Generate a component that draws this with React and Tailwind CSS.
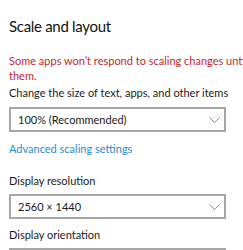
export default function App() {
  const Chevron = () => (
    <svg width="11" height="6" viewBox="0 0 11 6" className="shrink-0">
      <path d="M0.5 0.5 L5.5 5.5 L10.5 0.5" fill="none" stroke="#8f8f8f" strokeWidth="1" />
    </svg>
  );
  const Box = ({ children }) => (
    <div className="flex h-[25px] w-[217px] items-center justify-between border-2 border-[#a6a6a6] pl-[7px] pr-[4px] text-[11px] leading-[15px] text-[#1a1a1a]">
      <span>{children}</span>
      <Chevron />
    </div>
  );
  return (
    <div
      className="h-[250px] w-[243px] overflow-hidden bg-white pl-[9px]"
      style={{ fontFamily: "Lato, 'Noto Sans', sans-serif" }}
    >
      <div className="pt-[17px] text-[15px] leading-[19px] font-normal tracking-[-0.3px] text-[#111111]">Scale and layout</div>
      <div className="mt-[17px] w-[310px] text-[11px] leading-[15px] text-[#c4262b]">
        Some apps won’t respond to scaling changes until you restart them.
      </div>
      <div className="mt-[2px] text-[11px] leading-[15px] text-[#1a1a1a] whitespace-nowrap">
        Change the size of text, apps, and other items
      </div>
      <div className="mt-[7px]">
        <Box>100% (Recommended)</Box>
      </div>
      <div className="mt-[9px] text-[11px] leading-[15px] text-[#2a8ad4]">Advanced scaling settings</div>
      <div className="mt-[17px] text-[11px] leading-[15px] text-[#1a1a1a]">Display resolution</div>
      <div className="mt-[6px]">
        <Box>2560 × 1440</Box>
      </div>
      <div className="mt-[8px] text-[11px] leading-[15px] text-[#1a1a1a]">Display orientation</div>
      <div className="mt-[6px]">
        <Box>Landscape</Box>
      </div>
    </div>
  );
}
